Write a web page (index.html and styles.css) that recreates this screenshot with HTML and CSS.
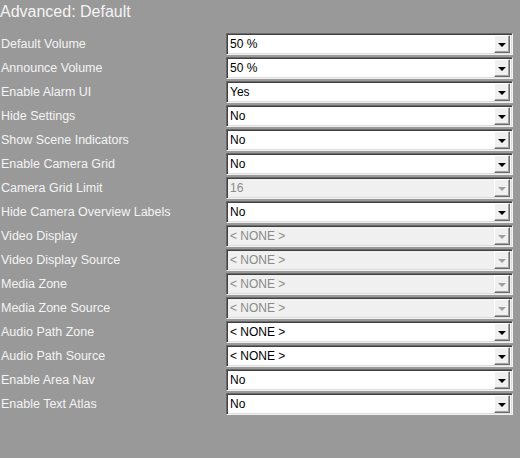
FILE: index.html
```html
<!DOCTYPE html>
<html>
<head>
<meta charset="utf-8">
<link rel="stylesheet" href="styles.css">
</head>
<body>
<div class="page">
  <div class="title">Advanced: Default</div>
  <div class="form">
    <div class="row"><div class="label">Default Volume</div><div class="select"><span class="value">50 %</span><span class="btn"><span class="tri"></span></span></div></div>
    <div class="row"><div class="label">Announce Volume</div><div class="select"><span class="value">50 %</span><span class="btn"><span class="tri"></span></span></div></div>
    <div class="row"><div class="label">Enable Alarm UI</div><div class="select"><span class="value">Yes</span><span class="btn"><span class="tri"></span></span></div></div>
    <div class="row"><div class="label">Hide Settings</div><div class="select"><span class="value">No</span><span class="btn"><span class="tri"></span></span></div></div>
    <div class="row"><div class="label">Show Scene Indicators</div><div class="select"><span class="value">No</span><span class="btn"><span class="tri"></span></span></div></div>
    <div class="row"><div class="label">Enable Camera Grid</div><div class="select"><span class="value">No</span><span class="btn"><span class="tri"></span></span></div></div>
    <div class="row"><div class="label">Camera Grid Limit</div><div class="select disabled"><span class="value">16</span><span class="btn"><span class="tri"></span></span></div></div>
    <div class="row"><div class="label">Hide Camera Overview Labels</div><div class="select"><span class="value">No</span><span class="btn"><span class="tri"></span></span></div></div>
    <div class="row"><div class="label">Video Display</div><div class="select disabled"><span class="value">&lt; NONE &gt;</span><span class="btn"><span class="tri"></span></span></div></div>
    <div class="row"><div class="label">Video Display Source</div><div class="select disabled"><span class="value">&lt; NONE &gt;</span><span class="btn"><span class="tri"></span></span></div></div>
    <div class="row"><div class="label">Media Zone</div><div class="select disabled"><span class="value">&lt; NONE &gt;</span><span class="btn"><span class="tri"></span></span></div></div>
    <div class="row"><div class="label">Media Zone Source</div><div class="select disabled"><span class="value">&lt; NONE &gt;</span><span class="btn"><span class="tri"></span></span></div></div>
    <div class="row"><div class="label">Audio Path Zone</div><div class="select"><span class="value">&lt; NONE &gt;</span><span class="btn"><span class="tri"></span></span></div></div>
    <div class="row"><div class="label">Audio Path Source</div><div class="select"><span class="value">&lt; NONE &gt;</span><span class="btn"><span class="tri"></span></span></div></div>
    <div class="row"><div class="label">Enable Area Nav</div><div class="select"><span class="value">No</span><span class="btn"><span class="tri"></span></span></div></div>
    <div class="row"><div class="label">Enable Text Atlas</div><div class="select"><span class="value">No</span><span class="btn"><span class="tri"></span></span></div></div>
  </div>
</div>
</body>
</html>
```
FILE: styles.css
```css
html, body {
  margin: 0;
  padding: 0;
  background: #999999;
}
.page {
  width: 520px;
  height: 458px;
  font-family: "Liberation Sans", Arial, sans-serif;
  color: #f4f4f4;
}
.title {
  height: 32px;
  font-size: 16px;
  line-height: 18px;
  padding-left: 0;
  padding-top: 3px;
  box-sizing: border-box;
}
.form {
  display: flex;
  flex-direction: column;
}
.row {
  height: 24px;
  display: flex;
  align-items: center;
}
.label {
  width: 226px;
  padding-left: 1px;
  box-sizing: border-box;
  font-size: 12.5px;
  white-space: nowrap;
}
.select {
  width: 287px;
  height: 22px;
  box-sizing: border-box;
  border: 1px solid;
  border-color: #6b6b6b #f2f2f2 #f2f2f2 #6b6b6b;
  box-shadow: inset 1px 1px 0 #404040, inset -1px -1px 0 #dcdcdc;
  background: #ffffff;
  display: flex;
  align-items: center;
  padding: 2px 2px 2px 3px;
  color: #000;
  font-size: 12px;
}
.select .value {
  flex: 1;
  white-space: nowrap;
}
.btn {
  width: 16px;
  height: 18px;
  box-sizing: border-box;
  background: #f0f0f0;
  border: 1px solid;
  border-color: #ffffff #6e6e6e #6e6e6e #ffffff;
  box-shadow: inset -1px -1px 0 #a0a0a0;
  display: flex;
  align-items: center;
  justify-content: center;
}
.tri {
  width: 0;
  height: 0;
  border-left: 4px solid transparent;
  border-right: 4px solid transparent;
  border-top: 4px solid #000;
  margin-top: 1px;
}
.select.disabled {
  background: #f0f0f0;
  color: #8a8a8a;
}
.select.disabled .tri {
  border-top-color: #a0a0a0;
}
```
